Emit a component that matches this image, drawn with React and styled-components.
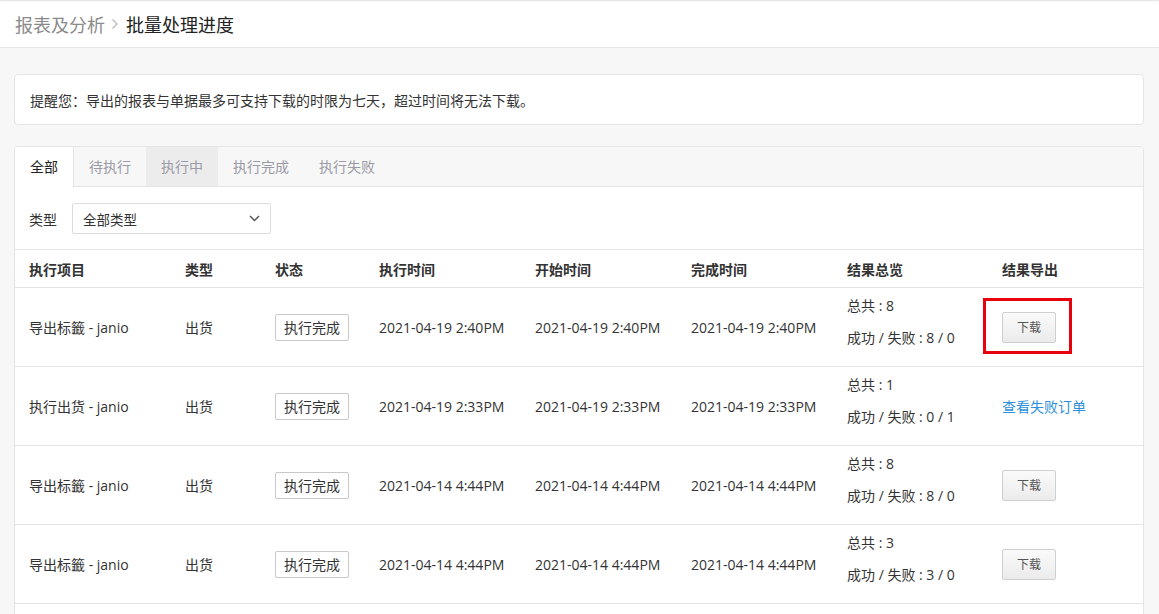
import React from 'react'
import styled, { createGlobalStyle, css } from 'styled-components'

const GlobalStyle = createGlobalStyle`
  body {
    margin: 0;
    background: #f7f7f7;
    font-family: "Open Sans", "Noto Sans CJK SC", sans-serif;
    font-size: 14px;
    color: #333;
  }
`

const Header = styled.header`
  height: 47px;
  display: flex;
  align-items: center;
  padding: 0 15px;
  background: #fff;
  border-bottom: 1px solid #e6e6e6;
  box-shadow: inset 0 2px 2px -1px rgba(0, 0, 0, 0.12);
  font-size: 18px;
`

const Crumb = styled.span`
  color: ${p => (p.$current ? '#222' : '#8a8a8a')};
`

const CrumbSep = styled.svg`
  width: 8px;
  height: 12px;
  margin: 0 7px 0 6px;
`

const Main = styled.main`
  padding: 26px 15px 0 14px;
  display: flex;
  flex-direction: column;
  gap: 21px;
`

const Notice = styled.div`
  height: 49px;
  display: flex;
  align-items: center;
  padding: 0 15px;
  background: #fff;
  border: 1px solid #e5e5e5;
  border-radius: 4px;
  color: #333;
`

const Panel = styled.section`
  background: #fff;
  border: 1px solid #e5e5e5;
  border-radius: 4px;
  overflow: hidden;
`

const TabBar = styled.nav`
  display: flex;
  height: 39px;
  background: #f7f7f7;
  border-bottom: 1px solid #e5e5e5;
`

const Tab = styled.div`
  padding: 0 15px;
  line-height: 39px;
  color: #9a9aa6;
  cursor: pointer;
  ${p => p.$active && css`
    background: #fff;
    color: #222;
    border-right: 1px solid #e5e5e5;
    height: 40px;
  `}
  ${p => p.$hover && css`
    background: #ececec;
  `}
`

const Filter = styled.div`
  display: flex;
  align-items: center;
  gap: 15px;
  padding: 16px 14px 15px;
`

const Select = styled.div`
  width: 177px;
  height: 29px;
  padding: 0 10px;
  display: flex;
  align-items: center;
  justify-content: space-between;
  border: 1px solid #dcdcdc;
  border-radius: 2px;
  font-size: 13.5px;
  color: #333;
`

const Table = styled.table`
  width: 100%;
  border-collapse: collapse;
  table-layout: fixed;
`

const Th = styled.th`
  height: 37px;
  padding: 0 14px;
  text-align: left;
  font-weight: 700;
  color: #333;
  border-top: 1px solid #e5e5e5;
  border-bottom: 1px solid #e5e5e5;
`

const Td = styled.td`
  height: 78px;
  padding: 0 14px;
  border-bottom: 1px solid #e5e5e5;
  color: #333;
  white-space: nowrap;
`

const Status = styled.span`
  display: inline-block;
  padding: 0 8px;
  line-height: 25px;
  border: 1px solid #c8c8c8;
  border-radius: 2px;
  background: #fff;
`

const Summary = styled.div`
  line-height: 32px;
  margin-top: -10px;
`

const Highlight = styled.span`
  position: relative;
  display: inline-block;
  &::after {
    content: '';
    position: absolute;
    top: -14px;
    left: -19px;
    right: -16px;
    bottom: -11px;
    border: 3px solid #e8000b;
  }
`

const DownloadButton = styled.button`
  width: 54px;
  height: 31px;
  padding: 0;
  border: 1px solid #cfcfcf;
  border-radius: 2px;
  background: linear-gradient(#fafafa, #ebebeb);
  font-family: inherit;
  font-size: 12px;
  color: #555;
  cursor: pointer;
`

const Link = styled.a`
  color: #2d8fdb;
  text-decoration: none;
  cursor: pointer;
`

const tabs = ['全部', '待执行', '执行中', '执行完成', '执行失败']
const columns = ['执行项目', '类型', '状态', '执行时间', '开始时间', '完成时间', '结果总览', '结果导出']
const widths = [156, 90, 104, 156, 156, 156, 155]

const rows = [
  { name: '导出标籤 - janio', time: '2021-04-19 2:40PM', total: 8, ok: 8, fail: 0, highlight: true },
  { name: '执行出货 - janio', time: '2021-04-19 2:33PM', total: 1, ok: 0, fail: 1 },
  { name: '导出标籤 - janio', time: '2021-04-14 4:44PM', total: 8, ok: 8, fail: 0 },
  { name: '导出标籤 - janio', time: '2021-04-14 4:44PM', total: 3, ok: 3, fail: 0 },
  { name: '导出标籤 - janio', time: '2021-04-14 4:40PM', total: 5, ok: 5, fail: 0 },
]

const ResultCell = ({ row }) => {
  if (row.fail > 0) return <Link>查看失败订单</Link>
  const btn = <DownloadButton>下载</DownloadButton>
  return row.highlight ? <Highlight>{btn}</Highlight> : btn
}

export default function App() {
  return (
    <>
      <GlobalStyle />
      <Header>
        <Crumb>报表及分析</Crumb>
        <CrumbSep viewBox="0 0 8 12">
          <polyline points="1.5,1.5 6,6 1.5,10.5" fill="none" stroke="#b5b5b5" strokeWidth="1.2" />
        </CrumbSep>
        <Crumb $current>批量处理进度</Crumb>
      </Header>
      <Main>
        <Notice>提醒您：导出的报表与单据最多可支持下载的时限为七天，超过时间将无法下载。</Notice>
        <Panel>
          <TabBar>
            {tabs.map((t, i) => (
              <Tab key={t} $active={i === 0} $hover={i === 2}>{t}</Tab>
            ))}
          </TabBar>
          <Filter>
            <span>类型</span>
            <Select>
              <span>全部类型</span>
              <svg width="11" height="7" viewBox="0 0 11 7">
                <polyline points="1,1 5.5,5.5 10,1" fill="none" stroke="#555" strokeWidth="1.5" />
              </svg>
            </Select>
          </Filter>
          <Table>
            <colgroup>
              {widths.map((w, i) => <col key={i} style={{ width: w }} />)}
              <col />
            </colgroup>
            <thead>
              <tr>
                {columns.map(c => <Th key={c}>{c}</Th>)}
              </tr>
            </thead>
            <tbody>
              {rows.map((r, i) => (
                <tr key={i}>
                  <Td>{r.name}</Td>
                  <Td>出货</Td>
                  <Td><Status>执行完成</Status></Td>
                  <Td>{r.time}</Td>
                  <Td>{r.time}</Td>
                  <Td>{r.time}</Td>
                  <Td>
                    <Summary>
                      <div>总共 : {r.total}</div>
                      <div>成功 / 失败 : {r.ok} / {r.fail}</div>
                    </Summary>
                  </Td>
                  <Td><ResultCell row={r} /></Td>
                </tr>
              ))}
            </tbody>
          </Table>
        </Panel>
      </Main>
    </>
  )
}
